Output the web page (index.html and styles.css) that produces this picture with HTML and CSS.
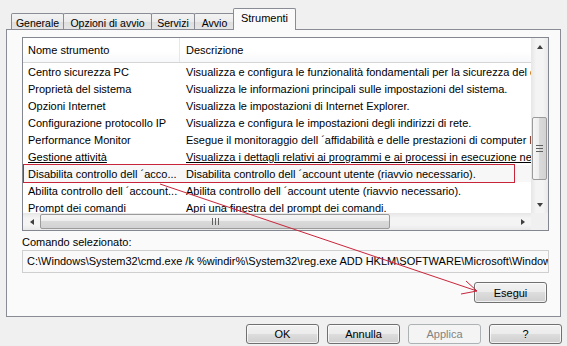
FILE: index.html
```html
<!DOCTYPE html>
<html lang="it">
<head>
<meta charset="utf-8">
<title>Configurazione di sistema</title>
<link rel="stylesheet" href="styles.css">
</head>
<body>
<div class="window">
  <div class="tabs">
    <div class="tab tab-generale">Generale</div>
    <div class="tab tab-opzioni">Opzioni di avvio</div>
    <div class="tab tab-servizi">Servizi</div>
    <div class="tab tab-avvio">Avvio</div>
    <div class="tab tab-strumenti active">Strumenti</div>
  </div>
  <div class="panel">
    <div class="list">
      <div class="list-main">
        <div class="list-view">
          <div class="header">
            <div class="col1">Nome strumento</div>
            <div class="col2">Descrizione</div>
          </div>
          <div class="row"><div class="col1">Centro sicurezza PC</div><div class="col2">Visualizza e configura le funzionalità fondamentali per la sicurezza del computer.</div></div>
          <div class="row"><div class="col1">Proprietà del sistema</div><div class="col2">Visualizza le informazioni principali sulle impostazioni del sistema.</div></div>
          <div class="row"><div class="col1">Opzioni Internet</div><div class="col2">Visualizza le impostazioni di Internet Explorer.</div></div>
          <div class="row"><div class="col1">Configurazione protocollo IP</div><div class="col2">Visualizza e configura le impostazioni degli indirizzi di rete.</div></div>
          <div class="row"><div class="col1">Performance Monitor</div><div class="col2">Esegue il monitoraggio dell ´affidabilità e delle prestazioni di computer locali e remoti.</div></div>
          <div class="row hot"><div class="col1">Gestione attività</div><div class="col2">Visualizza i dettagli relativi ai programmi e ai processi in esecuzione nel computer.</div></div>
          <div class="row selected"><div class="col1">Disabilita controllo dell ´acco...</div><div class="col2">Disabilita controllo dell ´account utente (riavvio necessario).</div></div>
          <div class="row"><div class="col1">Abilita controllo dell ´account...</div><div class="col2">Abilita controllo dell ´account utente (riavvio necessario).</div></div>
          <div class="row"><div class="col1">Prompt dei comandi</div><div class="col2">Apri una finestra del prompt dei comandi.</div></div>
        </div>
        <div class="hscroll">
          <div class="sb-btn"><span class="tri tri-left"></span></div>
          <div class="htrack">
            <div class="hthumb"><span class="hgrip"></span></div>
          </div>
          <div class="sb-btn"><span class="tri tri-right"></span></div>
        </div>
      </div>
      <div class="vscroll">
        <div class="sb-btn"><span class="tri tri-up"></span></div>
        <div class="vtrack">
          <div class="vthumb"><span class="vgrip"></span></div>
        </div>
        <div class="sb-btn"><span class="tri tri-down"></span></div>
        <div class="corner"></div>
      </div>
    </div>
    <div class="label">Comando selezionato:</div>
    <div class="cmd">C:\Windows\System32\cmd.exe /k %windir%\System32\reg.exe ADD HKLM\SOFTWARE\Microsoft\Windows\CurrentVersion\Policies\System /v EnableLUA /t REG_DWORD /d 0 /f</div>
    <div class="exec-row"><div class="btn">Esegui</div></div>
  </div>
  <div class="buttons">
    <div class="btn">OK</div>
    <div class="btn">Annulla</div>
    <div class="btn disabled">Applica</div>
    <div class="btn">?</div>
  </div>
</div>
<svg class="annotation" width="567" height="346" viewBox="0 0 567 346">
  <rect x="23.5" y="164.5" width="491" height="18" fill="none" stroke="#c8243a" stroke-width="1"/>
  <line x1="160" y1="184" x2="477" y2="291" stroke="#c8243a" stroke-width="1"/>
  <polyline points="466,281 477,291 461,294" fill="none" stroke="#c8243a" stroke-width="1"/>
</svg>
</body>
</html>
```

FILE: styles.css
```css
* { box-sizing: border-box; }

html, body {
  margin: 0;
  padding: 0;
}

body {
  width: 567px;
  height: 346px;
  background: #f0f0f0;
  font-family: "Liberation Sans", Arial, sans-serif;
  font-size: 11px;
  color: #000;
  position: relative;
  overflow: hidden;
}

.window {
  display: flex;
  flex-direction: column;
  height: 346px;
  padding: 8px 6px 0 6px;
}

/* ---------- tabs ---------- */
.tabs {
  display: flex;
  align-items: flex-end;
  height: 22px;
  margin-left: 5px;
  font-size: 10.5px;
}

.tab {
  height: 17px;
  border: 1px solid #898c95;
  border-bottom: none;
  border-radius: 2px 2px 0 0;
  background: linear-gradient(#f3f3f3, #ebebeb 50%, #dedede 50%, #e6e6e6);
  margin-right: -1px;
  display: flex;
  align-items: center;
  justify-content: center;
  white-space: nowrap;
  padding-top: 1px;
}

.tab-generale { width: 53px; }
.tab-opzioni { width: 89px; }
.tab-servizi { width: 44px; }
.tab-avvio { width: 41px; }

.tab.active {
  width: 63px;
  height: 22px;
  margin-left: -1px;
  background: #fafafa;
  position: relative;
  z-index: 2;
  align-items: flex-start;
  padding-top: 3px;
  font-size: 11px;
}

/* ---------- panel ---------- */
.panel {
  margin-top: -1px;
  height: 288px;
  border: 1px solid #898c95;
  background: #fafafa;
  padding: 7px 11px 0 15px;
  display: flex;
  flex-direction: column;
}

/* ---------- list view ---------- */
.list {
  height: 194px;
  border: 1px solid #828790;
  background: #fff;
  display: flex;
}

.list-main {
  flex: 1;
  min-width: 0;
  display: flex;
  flex-direction: column;
}

.list-view {
  flex: 1;
  overflow: hidden;
}

.header {
  height: 25px;
  display: flex;
  border-bottom: 1px solid #d5d5d5;
  background: linear-gradient(#ffffff, #ffffff 55%, #f7f8fa);
  line-height: 25px;
}

.header .col1 {
  border-right: 1px solid #e3e8ee;
}

.col1 {
  width: 157px;
  flex: none;
  padding-left: 5px;
  white-space: nowrap;
  overflow: hidden;
}

.col2 {
  flex: 1;
  min-width: 0;
  padding-left: 6px;
  white-space: nowrap;
  overflow: hidden;
}

.row {
  height: 17px;
  line-height: 15px;
  padding-top: 2px;
  display: flex;
}

.row.hot .col1,
.row.hot .col2 {
  text-decoration: underline;
}

.row.selected {
  background: #f7f7f7;
}

/* ---------- scrollbars ---------- */
.hscroll {
  height: 17px;
  flex: none;
  display: flex;
  background: linear-gradient(#e6e6e6, #f4f4f4 30%, #f4f4f4 70%, #e9e9e9);
}

.vscroll {
  width: 17px;
  flex: none;
  display: flex;
  flex-direction: column;
  background: linear-gradient(to right, #e6e6e6, #f4f4f4 30%, #f4f4f4 70%, #e9e9e9);
}

.sb-btn {
  width: 17px;
  height: 17px;
  flex: none;
  display: flex;
  align-items: center;
  justify-content: center;
}

.tri {
  width: 0;
  height: 0;
  border: 3px solid transparent;
}

.tri-up { border-bottom: 4px solid #404040; border-top-width: 0; }
.tri-down { border-top: 4px solid #404040; border-bottom-width: 0; }
.tri-left { border-right: 4px solid #404040; border-left-width: 0; }
.tri-right { border-left: 4px solid #404040; border-right-width: 0; }

.htrack {
  flex: 1;
  display: flex;
  padding: 1px 0;
}

.hthumb {
  width: 350px;
  border: 1px solid #9b9b9b;
  border-radius: 2px;
  background: linear-gradient(#f6f6f6, #ededed 50%, #dadada 50%, #d2d2d2);
  display: flex;
  align-items: center;
  justify-content: center;
}

.hgrip {
  width: 7px;
  height: 7px;
  background: repeating-linear-gradient(to right, #606060 0 1px, transparent 1px 3px);
}

.vtrack {
  flex: 1;
  padding: 62px 1px 0;
}

.vthumb {
  height: 63px;
  border: 1px solid #9b9b9b;
  border-radius: 2px;
  background: linear-gradient(to right, #f6f6f6, #ededed 50%, #dadada 50%, #d2d2d2);
  display: flex;
  align-items: center;
  justify-content: center;
}

.vgrip {
  width: 7px;
  height: 7px;
  background: repeating-linear-gradient(#606060 0 1px, transparent 1px 3px);
}

.corner {
  height: 17px;
  flex: none;
  background: #f0f0f0;
}

/* ---------- command ---------- */
.label {
  margin-top: 4px;
  height: 15px;
  line-height: 15px;
}

.cmd {
  height: 23px;
  line-height: 21px;
  border: 1px solid #cfcfcf;
  background: #f9f9f9;
  padding-left: 4px;
  white-space: nowrap;
  overflow: hidden;
}

.exec-row {
  display: flex;
  justify-content: flex-end;
  margin-top: 9px;
  padding-right: 2px;
}

/* ---------- buttons ---------- */
.btn {
  width: 73px;
  height: 21px;
  border: 1px solid #707070;
  border-radius: 3px;
  background: linear-gradient(#f2f2f2, #ebebeb 50%, #dddddd 50%, #cfcfcf);
  box-shadow: inset 0 0 0 1px rgba(255, 255, 255, 0.7);
  display: flex;
  align-items: center;
  justify-content: center;
}

.btn.disabled {
  border-color: #adb2b5;
  background: #f4f4f4;
  color: #838383;
  box-shadow: none;
}

.buttons {
  display: flex;
  justify-content: flex-end;
  gap: 8px;
  margin-top: 7px;
  margin-right: -1px;
}

.buttons .btn {
  height: 20px;
}

/* ---------- annotation overlay ---------- */
.annotation {
  position: absolute;
  left: 0;
  top: 0;
  pointer-events: none;
}
```
